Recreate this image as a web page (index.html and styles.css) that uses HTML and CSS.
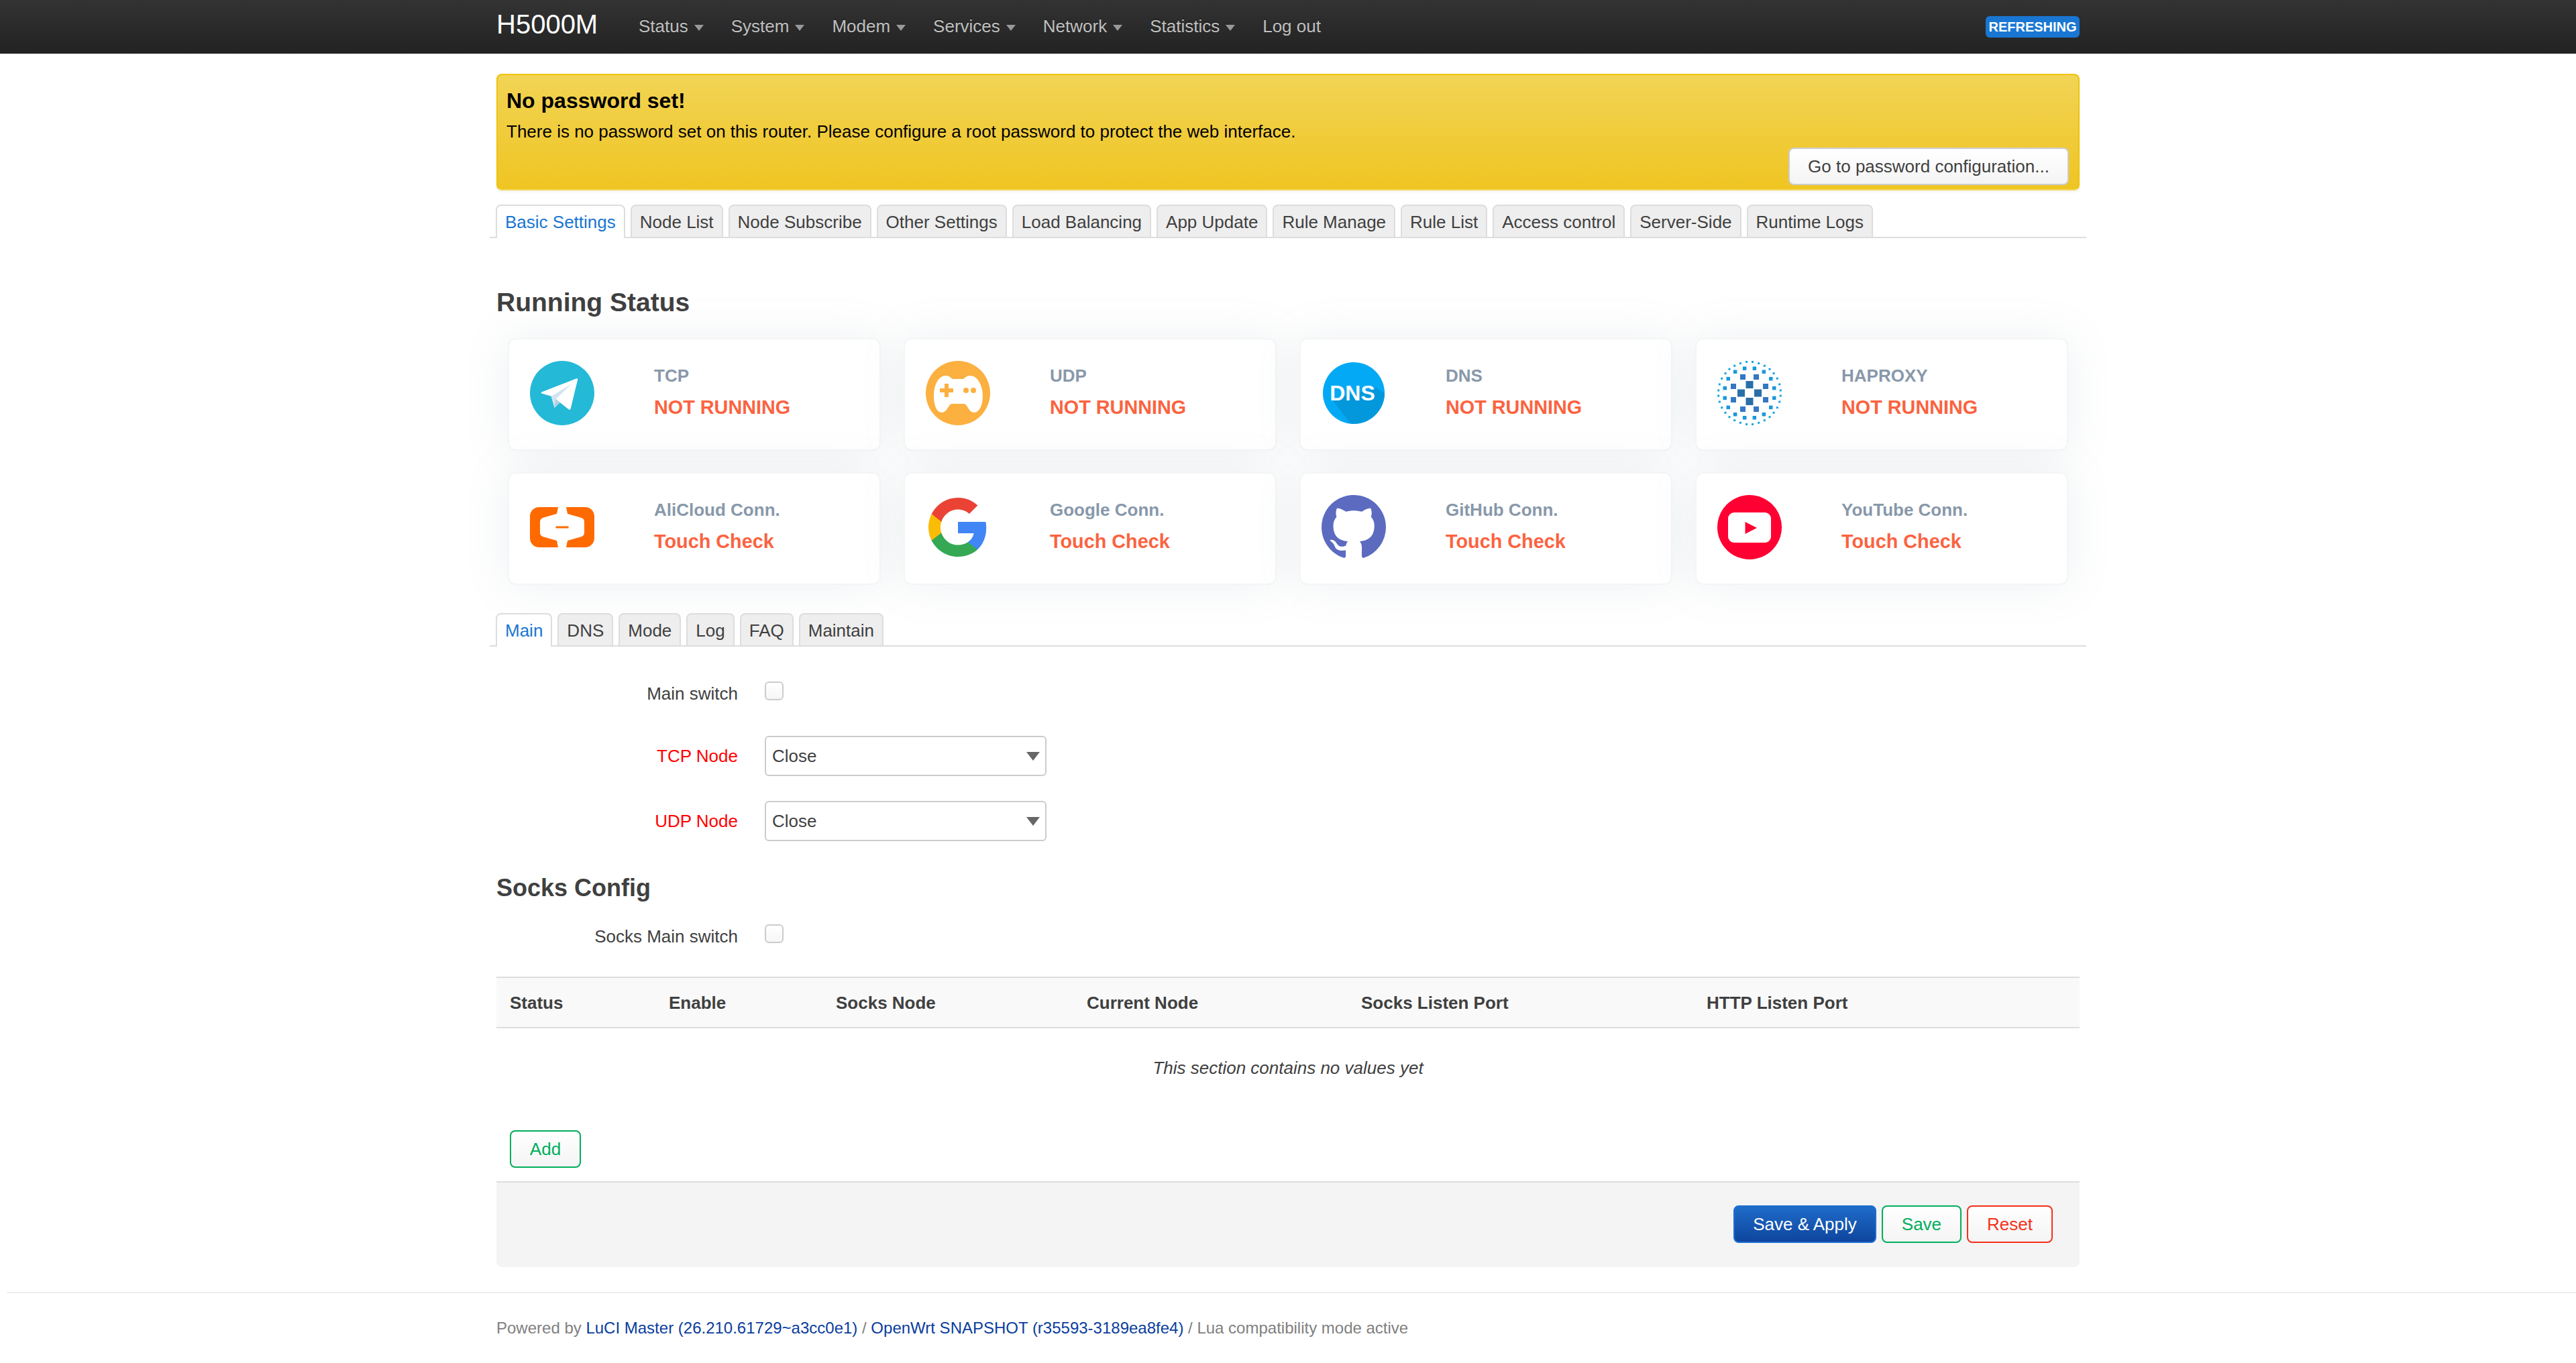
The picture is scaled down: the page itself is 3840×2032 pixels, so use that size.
FILE: index.html
```html
<!DOCTYPE html>
<html lang="en">
<head>
<meta charset="utf-8">
<title>H5000M</title>
<link rel="stylesheet" href="styles.css">
</head>
<body>
<header class="topbar">
  <div class="topbar-inner">
    <a class="brand" href="#">H5000M</a>
    <ul class="nav">
      <li><a class="caret-link" href="#">Status</a></li>
      <li><a class="caret-link" href="#">System</a></li>
      <li><a class="caret-link" href="#">Modem</a></li>
      <li><a class="caret-link" href="#">Services</a></li>
      <li><a class="caret-link" href="#">Network</a></li>
      <li><a class="caret-link" href="#">Statistics</a></li>
      <li><a href="#">Log out</a></li>
    </ul>
    <span class="badge">REFRESHING</span>
  </div>
</header>

<main class="container">
  <section class="alert">
    <h4 class="alert-title">No password set!</h4>
    <p class="alert-text">There is no password set on this router. Please configure a root password to protect the web interface.</p>
    <div class="alert-actions"><button class="btn btn-plain" type="button">Go to password configuration...</button></div>
  </section>

  <ul class="tabs">
    <li class="active"><a href="#">Basic Settings</a></li>
    <li><a href="#">Node List</a></li>
    <li><a href="#">Node Subscribe</a></li>
    <li><a href="#">Other Settings</a></li>
    <li><a href="#">Load Balancing</a></li>
    <li><a href="#">App Update</a></li>
    <li><a href="#">Rule Manage</a></li>
    <li><a href="#">Rule List</a></li>
    <li><a href="#">Access control</a></li>
    <li><a href="#">Server-Side</a></li>
    <li><a href="#">Runtime Logs</a></li>
  </ul>

  <h3 class="section-title running-title">Running Status</h3>

  <div class="cards">
    <div class="card">
      <svg class="icon" viewBox="0 0 96 96"><circle cx="48" cy="48" r="48" fill="#24b9d7"/><path d="M69.5 26.3c1-.4 1.9.3 1.7 1.4L60.6 71.5c-.3 1.3-1.6 1.8-2.7 1L38.3 57l-1.6 13.3L31.7 52.7 17.4 48.4c-1-.3-1-1.5 0-1.9z" fill="#fff"/><path d="M31.7 52.7 61.7 34.7 38.3 57l-1.6 13.3z" fill="#d2e4f1"/><path d="M38.3 57 36.7 70.3 45 62.2z" fill="#b5cfe3"/></svg>
      <div class="card-text"><div class="card-label">TCP</div><div class="card-value">NOT RUNNING</div></div>
    </div>
    <div class="card">
      <svg class="icon" viewBox="0 0 96 96"><circle cx="48" cy="48" r="48" fill="#fbb040"/><path d="M30 22C36 22 38 27 41 27H55C58 27 60 22 66 22 78 22 85 38 85 52 85 66 80 77 72 77 64 77 62 64 57 64H39C34 64 32 77 24 77 16 77 12 66 12 52 12 38 18 22 30 22Z" fill="#fff"/><path d="M28 34h6v7h7v6h-7v7h-6v-7h-7v-6h7z" fill="#fbb040"/><circle cx="60" cy="44" r="4" fill="#fbb040"/><circle cx="71" cy="44" r="4" fill="#fbb040"/></svg>
      <div class="card-text"><div class="card-label">UDP</div><div class="card-value">NOT RUNNING</div></div>
    </div>
    <div class="card">
      <svg class="icon" viewBox="0 0 96 96"><circle cx="48" cy="48" r="46" fill="#03a9f4"/><path d="M16 58 42 92C44 94 46 94 48 94 73 94 94 73 94 48L82 40Z" fill="#0398dc"/><text class="dns-glyph" x="46" y="59" text-anchor="middle">DNS</text></svg>
      <div class="card-text"><div class="card-label">DNS</div><div class="card-value">NOT RUNNING</div></div>
    </div>
    <div class="card">
      <svg class="icon" viewBox="0 0 96 96">
        <defs>
          <g id="ha-quad">
            <rect x="6" y="20" width="8" height="8" fill="#3477c2"/><rect x="20" y="6" width="8" height="8" fill="#3477c2"/>
            <g fill="#1a98dc"><rect x="4.6" y="34" width="5.5" height="5.5"/><rect x="18.6" y="29" width="5.5" height="5.5"/><rect x="29" y="18.6" width="5.5" height="5.5"/><rect x="34" y="4.6" width="5.5" height="5.5"/></g>
            <g fill="#10a5e0"><rect x="3" y="45" width="3" height="3"/><rect x="12.2" y="42.8" width="3" height="3"/><rect x="20.8" y="39.2" width="3" height="3"/><rect x="28.5" y="34.2" width="3" height="3"/><rect x="34.5" y="27.8" width="3" height="3"/><rect x="39.8" y="20.2" width="3" height="3"/><rect x="43.2" y="11.5" width="3" height="3"/><rect x="44.8" y="2.5" width="3" height="3"/></g>
          </g>
        </defs>
        <g transform="translate(48 48)">
          <use href="#ha-quad"/><use href="#ha-quad" transform="scale(-1 1)"/><use href="#ha-quad" transform="scale(1 -1)"/><use href="#ha-quad" transform="scale(-1 -1)"/>
          <g fill="#2a6fa8"><rect x="-5.5" y="-18" width="11" height="11"/><rect x="-18" y="-5.5" width="11" height="11"/><rect x="7" y="-5.5" width="11" height="11"/><rect x="-5.5" y="7" width="11" height="11"/></g>
        </g>
      </svg>
      <div class="card-text"><div class="card-label">HAPROXY</div><div class="card-value">NOT RUNNING</div></div>
    </div>
    <div class="card">
      <svg class="icon" viewBox="0 0 96 96"><g transform="translate(0 18)"><path d="M42 0H14C6 0 0 6 0 14V46C0 54 6 60 14 60H42L40 50 19 44C16.5 43 15 41 15 38V22C15 19 16.5 17 19 16L40 10Z" fill="#ff6a00"/><path d="M54 0H82C90 0 96 6 96 14V46C96 54 90 60 82 60H54L56 50 77 44C79.500 43 81 41 81 38V22C81 19 79.500 17 77 16L56 10Z" fill="#ff6a00"/><rect x="38.500" y="28.500" width="19" height="3" fill="#ff6a00"/></g></svg>
      <div class="card-text"><div class="card-label">AliCloud Conn.</div><div class="card-value">Touch Check</div></div>
    </div>
    <div class="card">
      <svg class="icon" viewBox="0 0 24 24"><path fill="#4285F4" d="M22.56 12.25c0-.78-.07-1.53-.2-2.25H12v4.26h5.92c-.26 1.37-1.04 2.53-2.21 3.31v2.77h3.57c2.08-1.92 3.28-4.74 3.28-8.09z"/><path fill="#34A853" d="M12 23c2.97 0 5.46-.98 7.28-2.66l-3.57-2.77c-.98.66-2.23 1.06-3.71 1.06-2.86 0-5.29-1.93-6.16-4.53H2.18v2.84C3.99 20.53 7.7 23 12 23z"/><path fill="#FBBC05" d="M5.84 14.09c-.22-.66-.35-1.36-.35-2.09s.13-1.43.35-2.09V7.07H2.18C1.43 8.55 1 10.22 1 12s.43 3.45 1.18 4.93l2.85-2.22.81-.62z"/><path fill="#EA4335" d="M12 5.38c1.62 0 3.06.56 4.21 1.64l3.15-3.15C17.45 2.09 14.97 1 12 1 7.7 1 3.99 3.47 2.18 7.07l3.66 2.84c.87-2.6 3.3-4.53 6.16-4.53z"/></svg>
      <div class="card-text"><div class="card-label">Google Conn.</div><div class="card-value">Touch Check</div></div>
    </div>
    <div class="card">
      <svg class="icon" viewBox="0 0 16 16"><path fill="#5c6bc0" d="M8 0C3.58 0 0 3.58 0 8c0 3.54 2.29 6.53 5.47 7.59.4.07.55-.17.55-.38 0-.19-.01-.82-.01-1.49-2.01.37-2.53-.49-2.69-.94-.09-.23-.48-.94-.82-1.13-.28-.15-.68-.52-.01-.53.63-.01 1.08.58 1.23.82.72 1.21 1.87.87 2.33.66.07-.52.28-.87.51-1.07-1.78-.2-3.64-.89-3.64-3.95 0-.87.31-1.59.82-2.15-.08-.2-.36-1.02.08-2.12 0 0 .67-.21 2.2.82.64-.18 1.32-.27 2-.27.68 0 1.36.09 2 .27 1.53-1.04 2.2-.82 2.2-.82.44 1.1.16 1.92.08 2.12.51.56.82 1.27.82 2.15 0 3.07-1.87 3.75-3.65 3.95.29.25.54.73.54 1.48 0 1.07-.01 1.93-.01 2.2 0 .21.15.46.55.38A8.013 8.013 0 0016 8c0-4.42-3.58-8-8-8z"/></svg>
      <div class="card-text"><div class="card-label">GitHub Conn.</div><div class="card-value">Touch Check</div></div>
    </div>
    <div class="card">
      <svg class="icon" viewBox="0 0 96 96"><circle cx="48" cy="48" r="48" fill="#ff0033"/><rect x="16" y="26" width="64" height="45" rx="9" fill="#fff"/><path d="M41.500 40 59 49 41.500 58Z" fill="#ff0033"/></svg>
      <div class="card-text"><div class="card-label">YouTube Conn.</div><div class="card-value">Touch Check</div></div>
    </div>
  </div>

  <ul class="tabs tabs-inner">
    <li class="active"><a href="#">Main</a></li>
    <li><a href="#">DNS</a></li>
    <li><a href="#">Mode</a></li>
    <li><a href="#">Log</a></li>
    <li><a href="#">FAQ</a></li>
    <li><a href="#">Maintain</a></li>
  </ul>

  <div class="form-row row-main">
    <label class="form-label">Main switch</label>
    <input class="check" type="checkbox">
  </div>
  <div class="form-row row-tcp">
    <label class="form-label required">TCP Node</label>
    <select class="select"><option>Close</option></select>
  </div>
  <div class="form-row row-udp">
    <label class="form-label required">UDP Node</label>
    <select class="select"><option>Close</option></select>
  </div>

  <h3 class="section-title socks-title">Socks Config</h3>
  <div class="form-row row-socks">
    <label class="form-label">Socks Main switch</label>
    <input class="check" type="checkbox">
  </div>

  <div class="table">
    <div class="table-head">
      <span>Status</span><span>Enable</span><span>Socks Node</span><span>Current Node</span><span>Socks Listen Port</span><span>HTTP Listen Port</span>
    </div>
    <div class="table-empty">This section contains no values yet</div>
  </div>
  <div class="add-row"><button class="btn btn-green" type="button">Add</button></div>

  <div class="actions">
    <button class="btn btn-primary" type="button">Save &amp; Apply</button>
    <button class="btn btn-green" type="button">Save</button>
    <button class="btn btn-red" type="button">Reset</button>
  </div>
</main>

<footer class="footer">
  <div class="footer-inner">Powered by <a href="#">LuCI Master (26.210.61729~a3cc0e1)</a> / <a href="#">OpenWrt SNAPSHOT (r35593-3189ea8fe4)</a> / Lua compatibility mode active</div>
</footer>
</body>
</html>
```

FILE: styles.css
```css
* { box-sizing: border-box; }
html, body { margin: 0; padding: 0; }
body {
  background: #fff;
  color: #404040;
  font: 26px/36px "Liberation Sans", Arial, sans-serif;
}
ul { list-style: none; margin: 0; padding: 0; }
a { text-decoration: none; color: inherit; }

.topbar {
  height: 80px;
  background: linear-gradient(#333, #222);
}
.topbar-inner {
  width: 2360px;
  margin: 0 auto;
  height: 80px;
  display: flex;
  align-items: flex-start;
}
.brand {
  color: #fff;
  font-size: 40px;
  line-height: 72px;
  width: 192px;
}
.nav { display: flex; }
.nav a {
  display: block;
  padding: 0 20px;
  line-height: 78px;
  color: #bfbfbf;
  text-shadow: 0 -2px 0 rgba(0,0,0,.25);
}
.nav .caret-link { padding-right: 21px; }
.caret-link::after {
  content: "";
  display: inline-block;
  margin-left: 9px;
  vertical-align: middle;
  border-top: 9px solid #999;
  border-left: 7px solid transparent;
  border-right: 7px solid transparent;
}
.badge {
  margin: 24px 0 0 auto;
  width: 140px;
  height: 32px;
  border-radius: 6px;
  background: #1976d2;
  color: #fff;
  font-size: 20px;
  font-weight: 700;
  line-height: 32px;
  text-align: center;
}

.container { width: 2360px; margin: 0 auto; }

.alert {
  margin-top: 30px;
  height: 174px;
  padding: 16px 13px 0;
  border: 2px solid #f0c30f;
  border-bottom-color: #f5d75e;
  border-radius: 8px;
  background: linear-gradient(#f2d455, #efc522);
  box-shadow: 0 2px 4px rgba(0,0,0,.06);
  color: #000;
  position: relative;
}
.alert-title { margin: 0; font-size: 32px; line-height: 44px; font-weight: 700; }
.alert-text { margin: 2px 0 0; line-height: 44px; }
.alert-actions { position: absolute; right: 14px; bottom: 6px; }

.btn {
  height: 56px;
  padding: 0 28px;
  border-radius: 8px;
  font: 26px/52px "Liberation Sans", Arial, sans-serif;
  border: 2px solid #ccc;
  background: linear-gradient(#fff, #f4f4f4);
}
.btn-plain { color: #404040; border-color: #ccc; width: 418px; padding: 0; }
.btn-green { color: #00ae5c; border-color: #00ae5c; }
.btn-red { color: #f5301a; border-color: #f5301a; }
.btn-primary {
  color: #fff;
  border-color: #1d6fd0;
  background: linear-gradient(#1f6cc9, #0e459e);
}

.tabs {
  display: flex;
  gap: 8px;
  margin: 21px -10px 0;
  padding: 0 9px;
  height: 50px;
  border-bottom: 2px solid #ddd;
}
.tabs li { height: 50px; }
.tabs a {
  display: block;
  height: 48px;
  padding: 0 12px;
  line-height: 48px;
  background: #eee;
  border: 2px solid #ddd;
  border-bottom: 0;
  border-radius: 8px 8px 0 0;
  color: #404040;
}
.tabs .active a {
  height: 50px;
  background: #fff;
  color: #1976d2;
}
.tabs-inner { margin-top: 0; }

.section-title {
  margin: 0;
  font-size: 36px;
  font-weight: 700;
  line-height: 44px;
  color: #404040;
}
.running-title { margin-top: 74px; font-size: 39px; }

.cards {
  display: grid;
  grid-template-columns: repeat(4, 556px);
  padding-left: 17px;
  column-gap: 34px;
  row-gap: 32px;
  margin: 31px 0 42px;
}
.card {
  height: 168px;
  display: flex;
  padding: 32px 31px;
  border: 2px solid #f4f5f6;
  border-radius: 12px;
  background: #fff;
  box-shadow: 0 0 64px rgba(136,152,170,.15);
}
.icon { width: 96px; height: 96px; flex: none; }
.dns-glyph {
  font: 700 32px "Liberation Sans", Arial, sans-serif;
  fill: #fff;
}
.card-text { margin-left: 89px; }
.card-label {
  color: #8898aa;
  font-weight: 700;
  line-height: 44px;
}
.card-value {
  margin-top: 1px;
  color: #fb6340;
  font-size: 28.8px;
  font-weight: 700;
  line-height: 49px;
}

.form-row {
  display: grid;
  grid-template-columns: 360px 420px;
  column-gap: 40px;
  align-items: center;
}
.form-label { text-align: right; }
.required { color: #f00; }
.row-main { margin-top: 50px; height: 40px; }
.row-main .check, .row-socks .check { margin-top: -8px; }
.row-tcp { margin-top: 43px; height: 60px; }
.row-udp { margin-top: 37px; height: 60px; }
.row-socks { margin-top: 30px; height: 40px; }
.check {
  appearance: none;
  margin: 0;
  width: 28px;
  height: 28px;
  border: 2px solid #ccc;
  border-radius: 6px;
  background: linear-gradient(#fff, #f6f6f6);
}
.select {
  appearance: none;
  width: 420px;
  height: 60px;
  padding: 0 9px;
  border: 2px solid #ccc;
  border-radius: 6px;
  color: #404040;
  font: 26px "Liberation Sans", Arial, sans-serif;
  background: #fff url("data:image/svg+xml,%3Csvg xmlns='http://www.w3.org/2000/svg' width='20' height='13'%3E%3Cpath d='M0 0h20L10 13z' fill='%23666'/%3E%3C/svg%3E") no-repeat right 8px center;
}
.socks-title { margin-top: 48px; }

.table { margin-top: 40px; }
.table-head {
  display: grid;
  grid-template-columns: 237px 249px 374px 409px 515px 1fr;
  padding-left: 20px;
  height: 77px;
  align-items: center;
  background: #f9f9f9;
  border-top: 2px solid #ddd;
  border-bottom: 2px solid #ddd;
  font-weight: 700;
}
.table-empty {
  height: 118px;
  padding-top: 41px;
  text-align: center;
  font-style: italic;
}
.add-row { padding: 34px 20px 0; height: 110px; }
.add-row .btn { width: 106px; padding: 0; }

.actions {
  height: 128px;
  padding-right: 40px;
  display: flex;
  gap: 8px;
  justify-content: flex-end;
  align-items: flex-start;
  padding-top: 34px;
  background: #f4f4f4;
  border-top: 2px solid #ddd;
  border-radius: 0 0 8px 8px;
}
.actions .btn { padding: 0 28px; }
.actions .btn-primary { padding: 0 27px; }

.footer {
  margin: 37px 0 0 10px;
  border-top: 2px solid #eee;
  height: 100px;
}
.footer-inner {
  width: 2360px;
  margin: 34px 0 0 730px;
  font-size: 24px;
  color: #808080;
}
.footer-inner a { color: #0a3d9e; }
```
